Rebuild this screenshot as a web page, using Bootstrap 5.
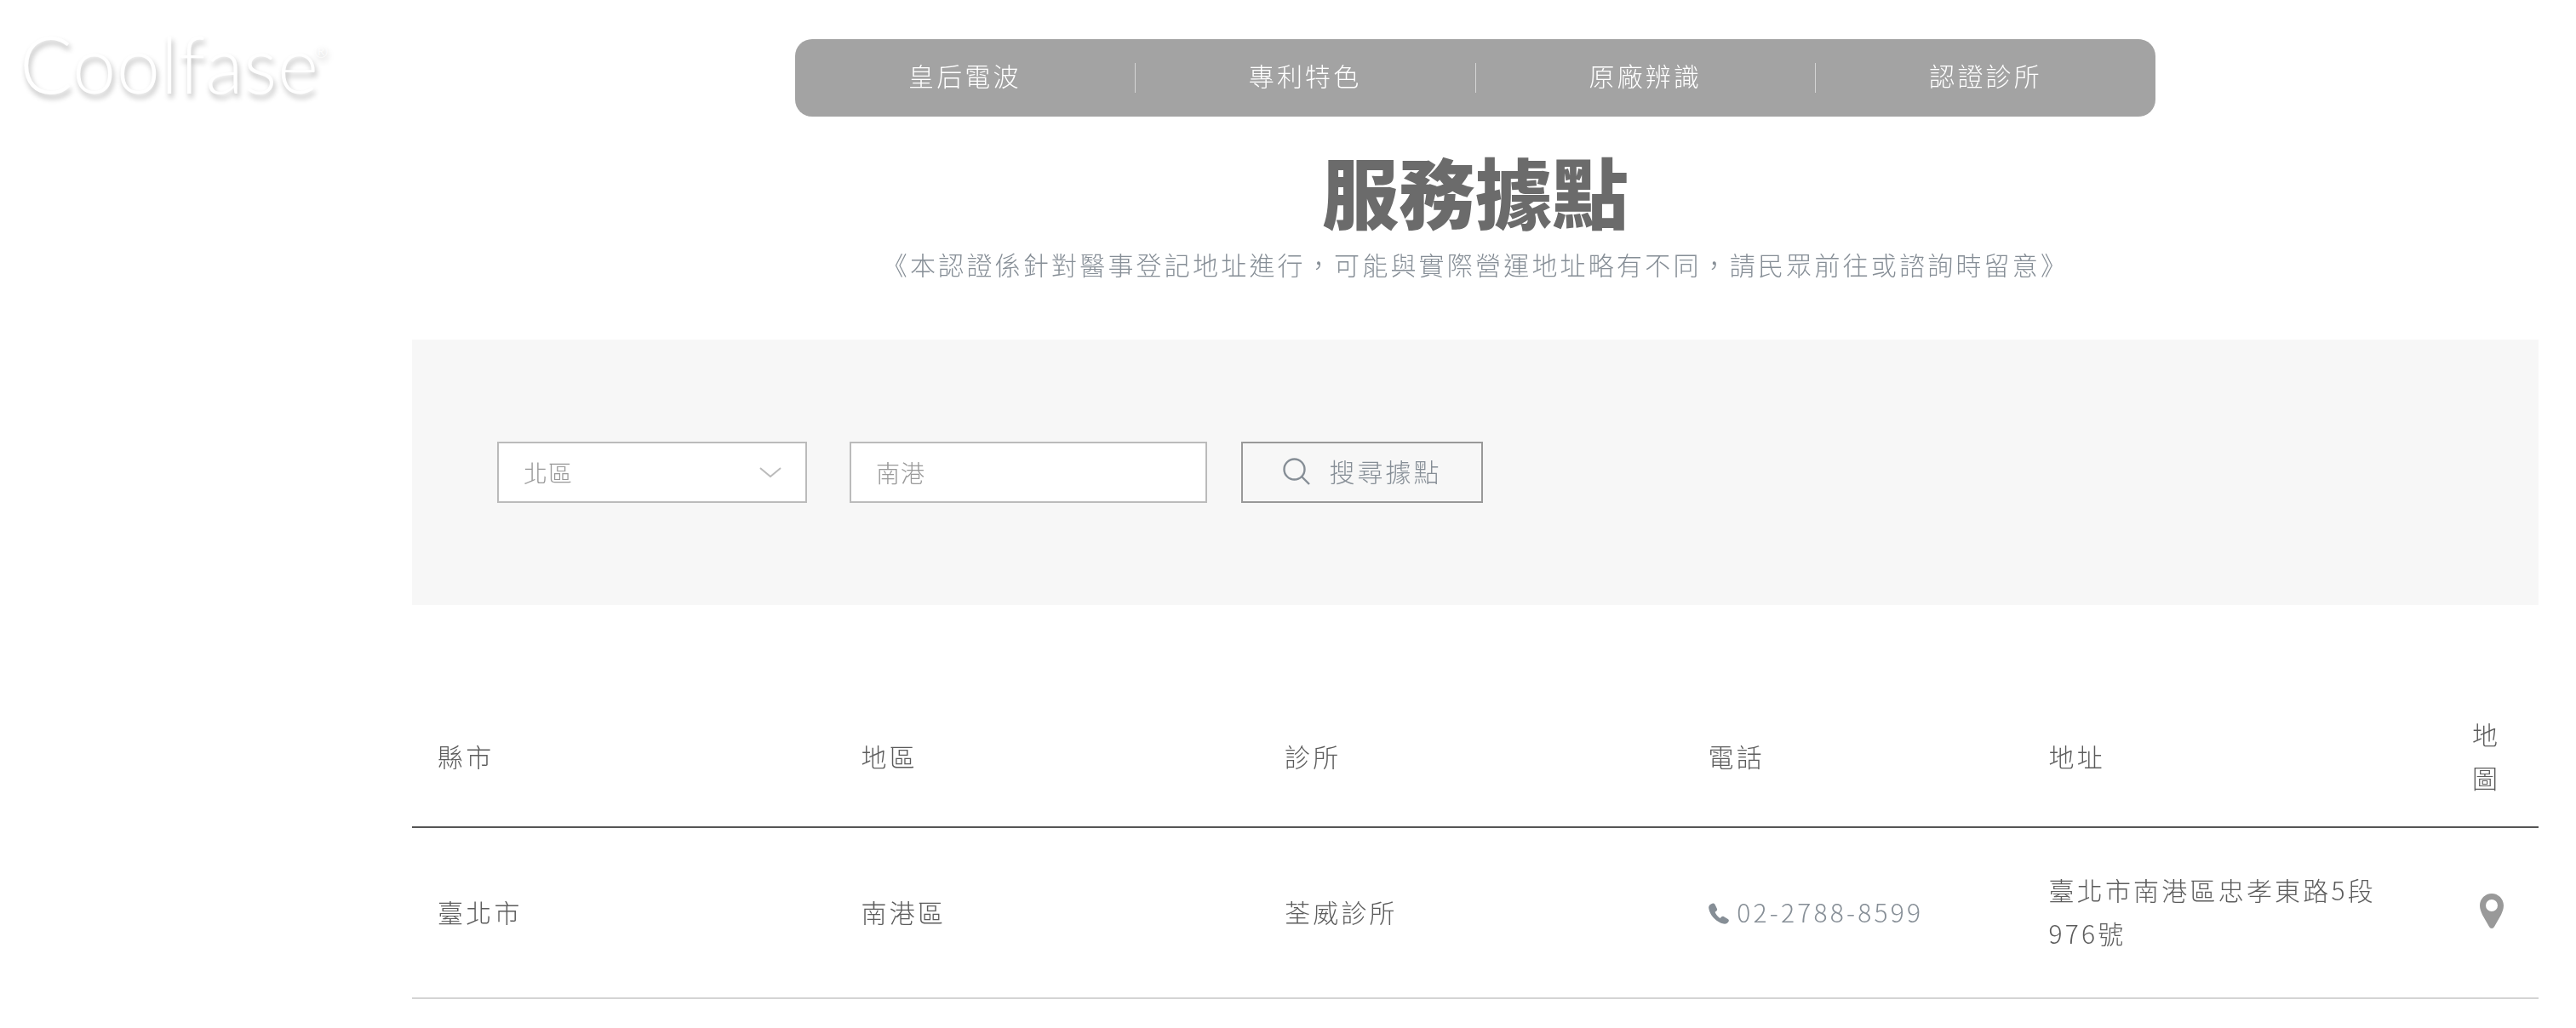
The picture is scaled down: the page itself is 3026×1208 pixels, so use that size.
<!DOCTYPE html>
<html lang="zh-Hant">
<head>
    <meta charset="UTF-8">
    <meta name="viewport" content="width=device-width, initial-scale=1.0">
    <title>服務據點</title>
    <link rel="stylesheet" href="https://cdn.jsdelivr.net/npm/bootstrap@5.3.0/dist/css/bootstrap.min.css">
    <style>
        body {
            background-color: #fff;
            font-family: "Noto Sans CJK TC", "Noto Sans", sans-serif;
            font-weight: 300;
            font-size: 30px;
            letter-spacing: 3.2px;
            color: #666;
        }
        .logo-col {
            width: 484px;
            padding: 20px 0 0 23px;
        }
        .logo {
            font-family: Lato, sans-serif;
            font-weight: 300;
            font-size: 92px;
            line-height: 110px;
            letter-spacing: .6px;
            color: #fff;
            text-shadow: 2px 5px 6px rgba(0, 0, 0, .28);
        }
        .logo sup {
            font-size: 20px;
            letter-spacing: 0;
            top: -42px;
            margin-left: -6px;
        }
        .main-col {
            width: 2498px;
            padding-top: 46px;
            will-change: transform;
        }
        .top-nav {
            width: 1598px;
            height: 91px;
            background-color: #a3a3a3;
            border-radius: 20px;
        }
        .top-nav a {
            flex: 1 1 0;
            color: #fff;
            text-decoration: none;
            line-height: 35px;
            text-align: center;
        }
        .top-nav a span {
            position: relative;
            top: -3px;
        }
        .top-nav a + a {
            border-left: 1px solid #d5d5d5;
        }
        .page-title {
            font-size: 90px;
            font-weight: 900;
            letter-spacing: 0;
            line-height: 108px;
            color: #6b6b6b;
            margin: 32px 0 0;
        }
        .page-note {
            color: #868e96;
            line-height: 44px;
            margin: 11px 0 0;
        }
        .search-panel {
            background-color: #f7f7f7;
            margin-top: 67px;
            height: 312px;
            padding-left: 100px;
        }
        .search-panel .form-select,
        .search-panel .form-control {
            height: 72px;
            border: 2px solid #bbb;
            border-radius: 0;
            font-size: 28px;
            font-weight: 300;
            letter-spacing: 1px;
            color: #999;
            padding: 0 0 0 29px;
            box-shadow: none;
        }
        .search-panel .form-select {
            width: 364px;
            margin-right: 50px;
            background-size: 26px 12px;
            background-position: right 28px center;
            background-image: url("data:image/svg+xml,%3csvg xmlns='http://www.w3.org/2000/svg' viewBox='0 0 26 12'%3e%3cpath fill='none' stroke='%23bbb' stroke-width='2' d='M1 1l12 10L25 1'/%3e%3c/svg%3e");
        }
        .search-panel .form-control {
            width: 420px;
            margin-right: 40px;
        }
        .search-panel .form-control::placeholder {
            color: #999;
        }
        .btn-search {
            width: 284px;
            height: 72px;
            border: 2px solid #999;
            border-radius: 0;
            color: #868e96;
            font-size: 30px;
            font-weight: 300;
            letter-spacing: 3px;
            padding: 0 0 3px;
            gap: 23px;
        }
        .place-table {
            table-layout: fixed;
            margin-top: 97px;
            margin-bottom: 0;
            color: #666;
        }
        .place-table th,
        .place-table td {
            padding: 30px;
            line-height: 51px;
            font-weight: 300;
            color: #5c5c5c;
            box-shadow: none;
        }
        .place-table thead th {
            border-bottom: 2px solid #555;
            vertical-align: middle;
            padding-top: 29px;
            padding-bottom: 32px;
        }
        .place-table tbody td {
            border-bottom: 2px solid #d4d4d4;
            padding-top: 47px;
            padding-bottom: 50px;
        }
        .col-wide { width: 497.5px; }
        .col-phone { width: 400px; }
        .col-map { width: 108px; }
        .place-table .phone {
            color: #868e96;
        }
        .phone-icon {
            vertical-align: -2px;
        }
        .pin-icon {
            display: block;
            margin: -2px 0 0 9px;
        }
    </style>
</head>
<body>

    <div class="d-flex">
        <!-- logo -->
        <div class="logo-col flex-shrink-0">
            <span class="logo">Coolfase<sup>®</sup></span>
        </div>

        <div class="main-col flex-shrink-0">
            <!-- top menu -->
            <nav class="top-nav d-flex align-items-center mx-auto">
                <a href="#"><span>皇后電波</span></a>
                <a href="#"><span>專利特色</span></a>
                <a href="#"><span>原廠辨識</span></a>
                <a href="#"><span>認證診所</span></a>
            </nav>

            <h1 class="page-title text-center">服務據點</h1>
            <p class="page-note text-center">《本認證係針對醫事登記地址進行，可能與實際營運地址略有不同，請民眾前往或諮詢時留意》</p>

            <!-- search -->
            <form class="search-panel d-flex align-items-center">
                <select class="form-select">
                    <option>北區</option>
                    <option>中區</option>
                    <option>南區</option>
                </select>
                <input type="text" class="form-control" placeholder="南港">
                <button type="button" class="btn btn-search d-flex align-items-center justify-content-center">
                    <svg width="32" height="32" viewBox="0 0 32 32" fill="none" stroke="#868e96" stroke-width="2.4">
                        <circle cx="13.500" cy="13.500" r="12"/>
                        <path d="M22 22l9 9"/>
                    </svg>
                    <span>搜尋據點</span>
                </button>
            </form>

            <!-- result table -->
            <table class="table place-table align-middle">
                <colgroup>
                    <col class="col-wide">
                    <col class="col-wide">
                    <col class="col-wide">
                    <col class="col-phone">
                    <col class="col-wide">
                    <col class="col-map">
                </colgroup>
                <thead>
                    <tr>
                        <th>縣市</th>
                        <th>地區</th>
                        <th>診所</th>
                        <th>電話</th>
                        <th>地址</th>
                        <th>地圖</th>
                    </tr>
                </thead>
                <tbody>
                    <tr>
                        <td>臺北市</td>
                        <td>南港區</td>
                        <td>荃威診所</td>
                        <td class="phone">
                            <svg class="phone-icon" width="24" height="25" viewBox="0 0 24 25" fill="#868e96">
                                <path d="M5 .5C6 .2 7 .8 7.500 1.800L10 7c.4 1 0 2-.8 2.600L7.600 10.800C8.500 13.500 11 16.500 13.500 18L15 16.400c.8-.8 1.900-1 2.800-.4l5 3c1 .6 1.400 1.800.8 2.800-1.200 2.200-3.600 3.400-6 2.800C8.500 22.400 1.500 14.500.2 6-.2 3.600 2 1.200 5 .5z"/>
                            </svg>
                            02-2788-8599
                        </td>
                        <td>臺北市南港區忠孝東路5段976號</td>
                        <td>
                            <svg class="pin-icon" width="28" height="41" viewBox="0 0 28 41" fill="#999">
                                <path fill-rule="evenodd" d="M14 0C6.300 0 0 6.300 0 14c0 4 1.500 7.500 3 11l8 14c1.300 2.600 4.700 2.600 6 0l8-14c1.500-3.500 3-7 3-11C28 6.300 21.700 0 14 0zm0 7a7 7 0 1 1 0 14 7 7 0 0 1 0-14z"/>
                            </svg>
                        </td>
                    </tr>
                </tbody>
            </table>
        </div>
    </div>

    <script src="https://cdn.jsdelivr.net/npm/bootstrap@5.3.0/dist/js/bootstrap.bundle.min.js"></script>
</body>
</html>
